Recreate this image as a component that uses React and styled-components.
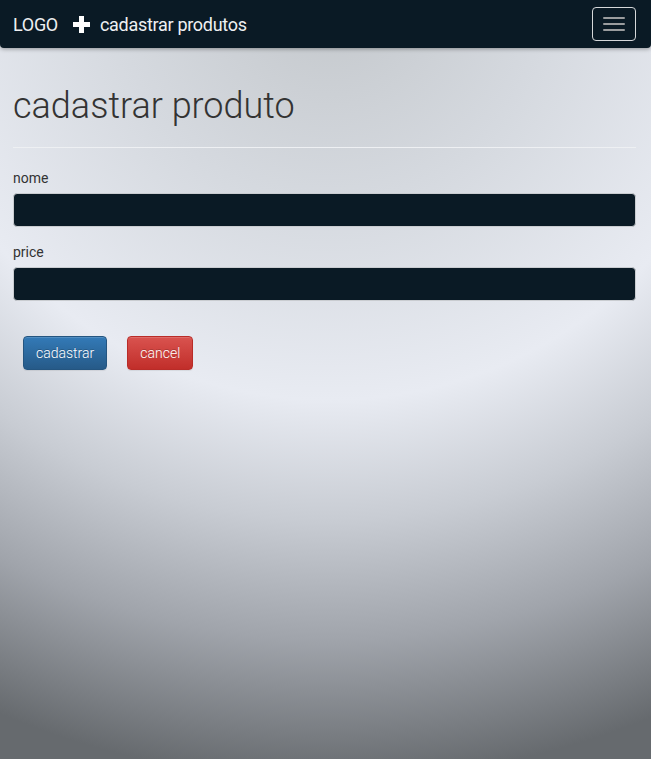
import React from "react";
import styled, { createGlobalStyle } from "styled-components";

const GlobalStyle = createGlobalStyle`
  html, body { margin: 0; padding: 0; height: 100%; }
  body { font-family: Roboto, "Liberation Sans", sans-serif; color: #333; }
  * { box-sizing: border-box; }
`;

const Page = styled.div`
  min-height: 100vh;
  background: radial-gradient(
    ellipse 420px 400px at 330px 0px,
    #c4c8cc 0%,
    #d5d9df 50%,
    #e8ebf2 100%,
    #c8ccd3 130%,
    #a0a4ab 160%,
    #666a6e 195%
  );
`;

const Navbar = styled.nav`
  height: 48px;
  background: #0a1a25;
  border-radius: 0 0 4px 4px;
  box-shadow: 0 1px 4px rgba(0, 0, 0, 0.35);
  display: flex;
  align-items: center;
  padding: 0 15px 0 13px;
`;

const Brand = styled.span`
  font-size: 18px;
  letter-spacing: -0.3px;
  color: #eef0f2;
  margin-right: 15px;
`;

const NavItem = styled.span`
  display: flex;
  align-items: center;
  gap: 10px;
  font-size: 18px;
  letter-spacing: -0.3px;
  color: #eef0f2;
`;

const Toggle = styled.button`
  margin-left: auto;
  width: 44px;
  height: 34px;
  border: 1px solid #d6d8da;
  border-radius: 4px;
  background: transparent;
  display: flex;
  flex-direction: column;
  align-items: center;
  justify-content: center;
  gap: 4px;
  padding: 0;
`;

const Bar = styled.span`
  display: block;
  width: 22px;
  height: 2px;
  border-radius: 1px;
  background: #9a9c9e;
`;

const Main = styled.main`
  padding: 0 15px 0 13px;
`;

const Title = styled.h1`
  margin: 39px 0 0;
  font-size: 36px;
  font-weight: 300;
  line-height: 1.1;
  color: #333;
`;

const Rule = styled.hr`
  margin: 20px 0;
  border: 0;
  border-top: 1px solid #eef0f3;
`;

const Group = styled.div`
  margin-bottom: 15px;
`;

const Label = styled.label`
  display: block;
  font-size: 14px;
  line-height: 20px;
  font-weight: 400;
  color: #333;
  margin-bottom: 5px;
`;

const Input = styled.input`
  display: block;
  width: 100%;
  height: 34px;
  background: #0a1a25;
  border: 1px solid #c9ccd0;
  border-radius: 4px;
  color: #fff;
  padding: 6px 12px;
  font-size: 14px;
  font-family: inherit;
`;

const Actions = styled.div`
  display: flex;
  gap: 20px;
  padding: 20px 0 0 10px;
`;

const Button = styled.button`
  height: 34px;
  padding: 0 12px;
  font-family: Roboto, "Liberation Sans", sans-serif;
  font-size: 14px;
  font-weight: 300;
  color: #fff;
  text-shadow: 0 -1px 0 rgba(0, 0, 0, 0.2);
  border-radius: 4px;
  border: 1px solid ${(p) => (p.$variant === "danger" ? "#b92c28" : "#245580")};
  background: ${(p) =>
    p.$variant === "danger"
      ? "linear-gradient(to bottom, #d9534f 0%, #c12e2a 100%)"
      : "linear-gradient(to bottom, #337ab7 0%, #265a88 100%)"};
  box-shadow: inset 0 1px 0 rgba(255, 255, 255, 0.15), 0 1px 1px rgba(0, 0, 0, 0.075);
  cursor: pointer;
`;

const PlusIcon = () => (
  <svg width="17" height="17" viewBox="0 0 17 17" aria-hidden="true">
    <path d="M6 0h5v6h6v5h-6v6H6v-6H0V6h6z" fill="#ffffff" />
  </svg>
);

export default function App() {
  return (
    <Page>
      <GlobalStyle />
      <Navbar>
        <Brand>LOGO</Brand>
        <NavItem>
          <PlusIcon />
          cadastrar produtos
        </NavItem>
        <Toggle aria-label="menu">
          <Bar />
          <Bar />
          <Bar />
        </Toggle>
      </Navbar>
      <Main>
        <Title>cadastrar produto</Title>
        <Rule />
        <form onSubmit={(e) => e.preventDefault()}>
          <Group>
            <Label htmlFor="nome">nome</Label>
            <Input id="nome" type="text" />
          </Group>
          <Group>
            <Label htmlFor="price">price</Label>
            <Input id="price" type="text" />
          </Group>
          <Actions>
            <Button type="submit">cadastrar</Button>
            <Button type="button" $variant="danger">
              cancel
            </Button>
          </Actions>
        </form>
      </Main>
    </Page>
  );
}
